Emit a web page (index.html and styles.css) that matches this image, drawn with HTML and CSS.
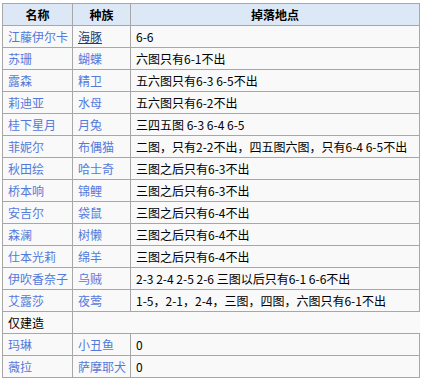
FILE: index.html
```html
<!DOCTYPE html>
<html lang="zh">
<head>
<meta charset="utf-8">
<link rel="stylesheet" href="styles.css">
</head>
<body>
<table class="drop-table">
  <colgroup>
    <col class="c-name">
    <col class="c-race">
    <col class="c-place">
  </colgroup>
  <thead>
    <tr><th>名称</th><th>种族</th><th>掉落地点</th></tr>
  </thead>
  <tbody>
    <tr><td><a class="lnk">江藤伊尔卡</a></td><td><a class="lnk visited">海豚</a></td><td>6-6</td></tr>
    <tr><td><a class="lnk">苏珊</a></td><td><a class="lnk">蝴蝶</a></td><td>六图只有6-1不出</td></tr>
    <tr><td><a class="lnk">露森</a></td><td><a class="lnk">精卫</a></td><td>五六图只有6-3 6-5不出</td></tr>
    <tr><td><a class="lnk">莉迪亚</a></td><td><a class="lnk">水母</a></td><td>五六图只有6-2不出</td></tr>
    <tr><td><a class="lnk">桂下星月</a></td><td><a class="lnk">月兔</a></td><td>三四五图 6-3 6-4 6-5</td></tr>
    <tr><td><a class="lnk">菲妮尔</a></td><td><a class="lnk">布偶猫</a></td><td>二图，只有2-2不出，四五图六图，只有6-4 6-5不出</td></tr>
    <tr><td><a class="lnk">秋田绘</a></td><td><a class="lnk">哈士奇</a></td><td>三图之后只有6-3不出</td></tr>
    <tr><td><a class="lnk">桥本响</a></td><td><a class="lnk">锦鲤</a></td><td>三图之后只有6-3不出</td></tr>
    <tr><td><a class="lnk">安吉尔</a></td><td><a class="lnk">袋鼠</a></td><td>三图之后只有6-4不出</td></tr>
    <tr><td><a class="lnk">森澜</a></td><td><a class="lnk">树懒</a></td><td>三图之后只有6-4不出</td></tr>
    <tr><td><a class="lnk">仕本光莉</a></td><td><a class="lnk">绵羊</a></td><td>三图之后只有6-4不出</td></tr>
    <tr><td><a class="lnk">伊吹香奈子</a></td><td><a class="lnk">乌贼</a></td><td>2-3 2-4 2-5 2-6 三图以后只有6-1 6-6不出</td></tr>
    <tr><td><a class="lnk">艾露莎</a></td><td><a class="lnk">夜莺</a></td><td>1-5，2-1，2-4，三图，四图，六图只有6-1不出</td></tr>
    <tr><td>仅建造</td><td class="open-end" colspan="2"></td></tr>
    <tr><td><a class="lnk">玛琳</a></td><td><a class="lnk">小丑鱼</a></td><td>0</td></tr>
    <tr><td><a class="lnk">薇拉</a></td><td><a class="lnk">萨摩耶犬</a></td><td>0</td></tr>
  </tbody>
</table>
</body>
</html>
```
FILE: styles.css
```css
html, body {
  margin: 0;
  background: #ffffff;
}
body {
  padding: 3px 0 0 2px;
  font-family: "Noto Sans CJK SC", "Noto Sans", sans-serif;
  font-size: 12px;
  color: #000;
}
.drop-table {
  border-collapse: collapse;
  table-layout: fixed;
  width: 417px;
  background: #f9f9f9;
  border: 1px solid #a7a7a7;
}
.c-name { width: 70px; }
.c-race { width: 58px; }
.c-place { width: 289px; }
.drop-table th,
.drop-table td {
  border: 1px solid #a7a7a7;
  padding: 2px 5px;
  line-height: 17px;
  white-space: nowrap;
  overflow: hidden;
  text-align: left;
  vertical-align: middle;
}
.drop-table th {
  background: #dde8f7;
  font-weight: bold;
  text-align: center;
}
.lnk {
  color: #5479dc;
  text-decoration: none;
}
.lnk.visited {
  color: #1b3b73;
  text-decoration: underline;
}
.drop-table td.open-end {
  border-right: hidden;
}
```
